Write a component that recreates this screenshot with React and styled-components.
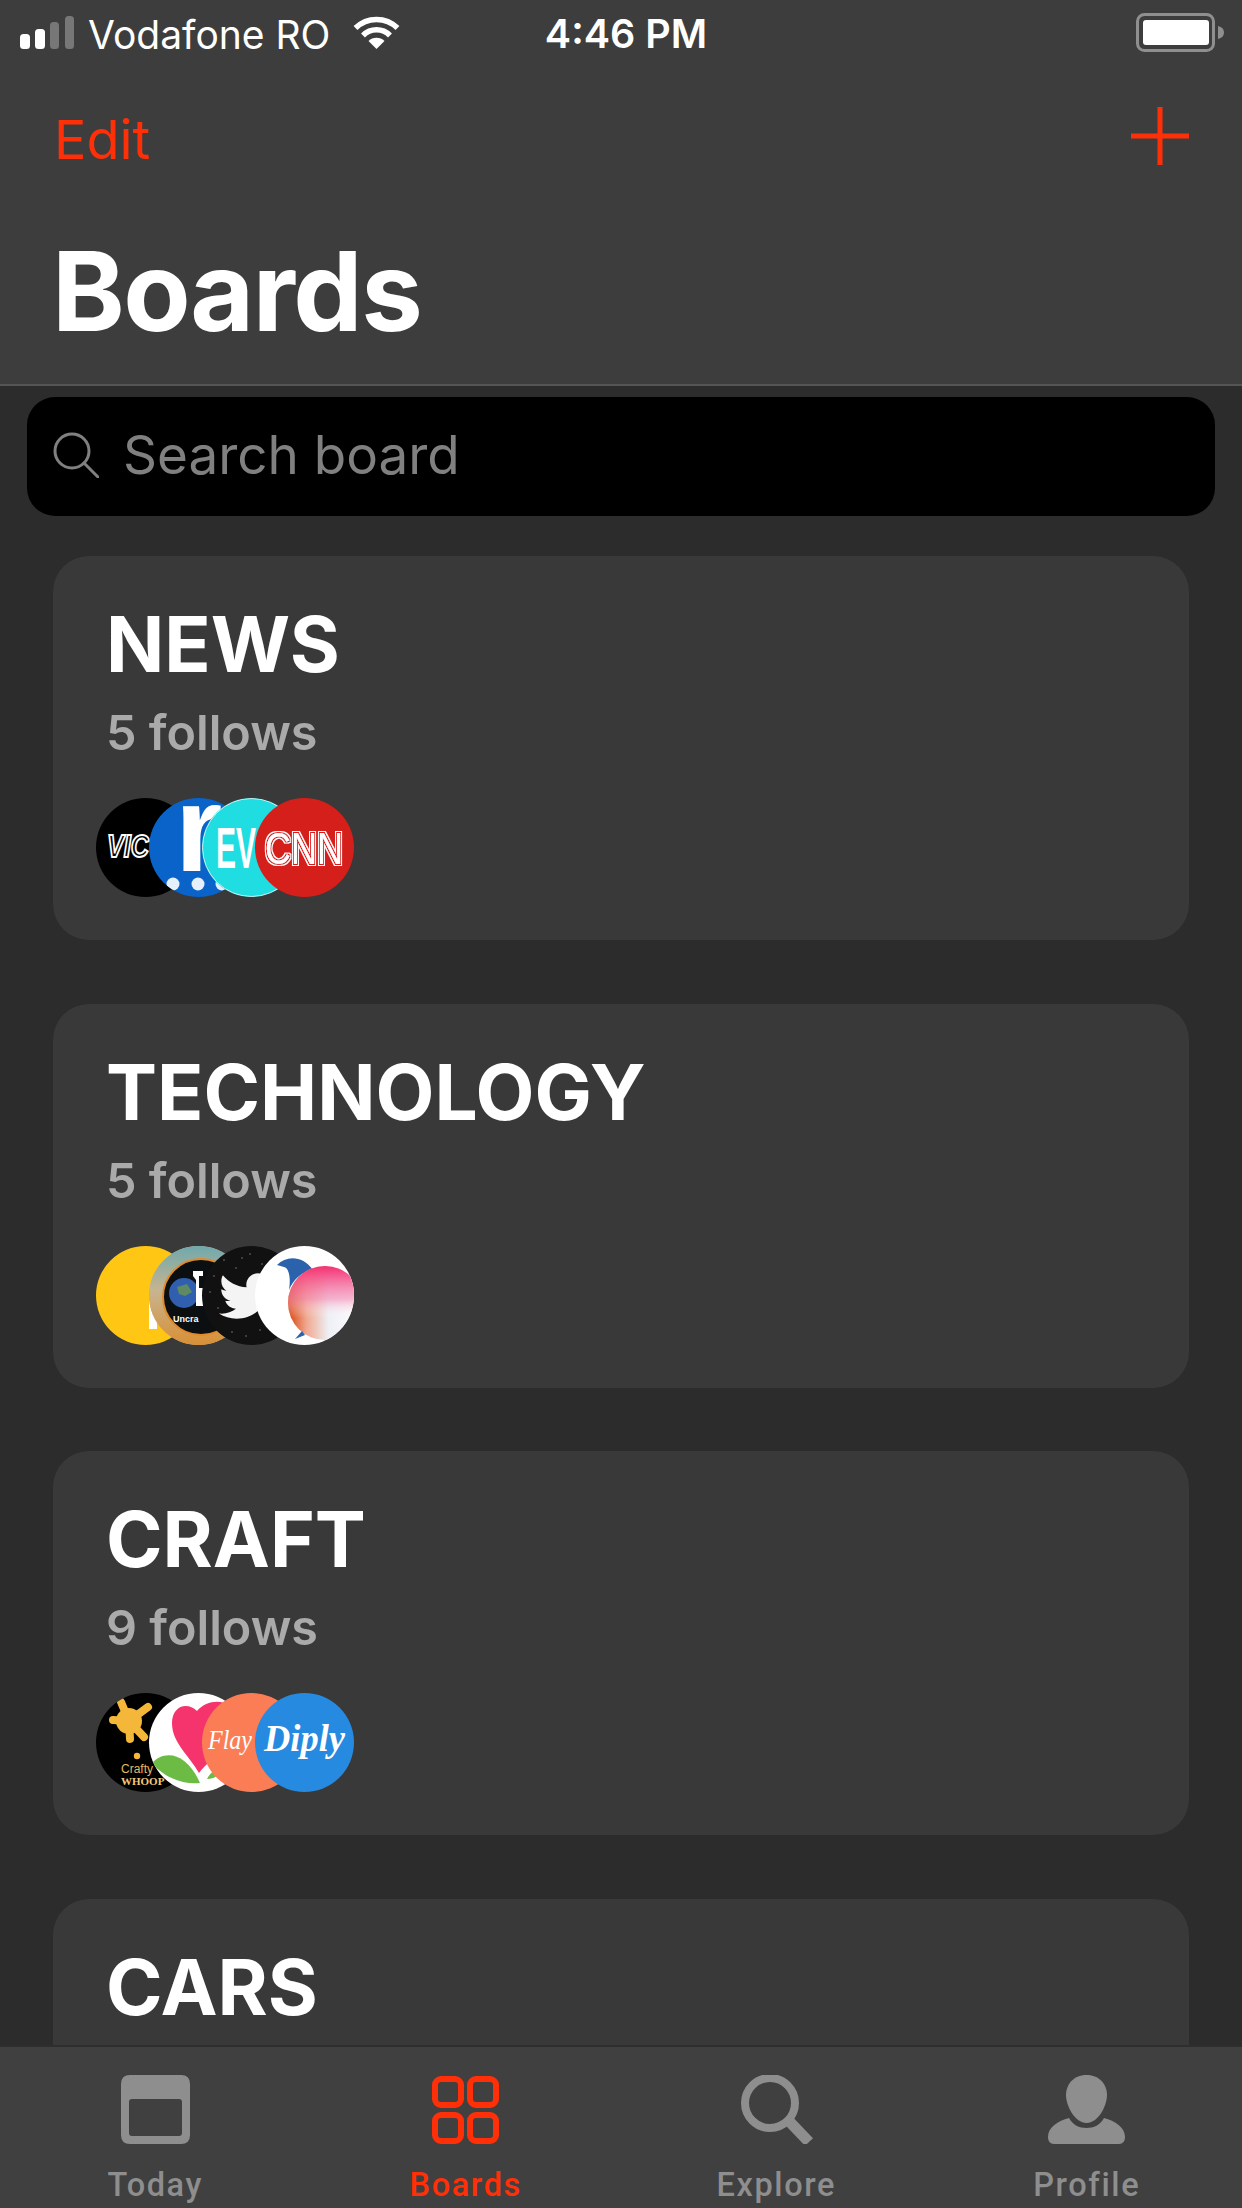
import React from 'react';
import styled, { createGlobalStyle } from 'styled-components';
import { FaTwitter } from 'react-icons/fa';

const GlobalStyle = createGlobalStyle`
  html, body {
    margin: 0;
    padding: 0;
    background: #2c2c2c;
  }
  * {
    box-sizing: border-box;
  }
`;

const ACCENT = '#ff3008';
const MUTED = '#8e8e8e';

const Screen = styled.div`
  width: 1242px;
  height: 2208px;
  display: flex;
  flex-direction: column;
  overflow: hidden;
  background: #2c2c2c;
  font-family: Inter, 'Liberation Sans', sans-serif;
`;

const Header = styled.header`
  flex: none;
  height: 386px;
  background: #3d3d3d;
  border-bottom: 2px solid #555555;
`;

const StatusBar = styled.div`
  height: 66px;
  display: grid;
  grid-template-columns: 1fr auto 1fr;
  align-items: center;
  padding: 0 18px 0 20px;
  color: #ffffff;
`;

const StatusLeft = styled.div`
  display: flex;
  align-items: center;
`;

const Carrier = styled.span`
  margin: 0 23px 0 14px;
  padding-top: 3px;
  font-size: 39px;
  font-weight: 400;
  line-height: 63px;
`;

const Clock = styled.span`
  padding: 3px 0 0 8px;
  font-size: 39.5px;
  font-weight: 600;
  line-height: 63px;
`;

const StatusRight = styled.div`
  display: flex;
  justify-content: flex-end;
`;

const NavRow = styled.div`
  height: 140px;
  display: flex;
  align-items: center;
  justify-content: space-between;
  padding: 0 53px 0 54px;
`;

const EditLabel = styled.span`
  padding-top: 7px;
  color: ${ACCENT};
  font-size: 54px;
  font-weight: 400;
  line-height: 1;
`;

const Title = styled.h1`
  margin: 0;
  padding-left: 52px;
  color: #ffffff;
  font-size: 110px;
  font-weight: 700;
  letter-spacing: -1.5px;
  line-height: 170px;
`;

const SearchWrap = styled.div`
  flex: none;
  padding: 11px 27px 0;
`;

const SearchBox = styled.div`
  height: 119px;
  display: flex;
  align-items: center;
  gap: 24px;
  padding: 0 26px 4px;
  background: #000000;
  border-radius: 28px;
  color: #808080;
  font-size: 53px;
  font-weight: 400;
`;

const BoardList = styled.main`
  flex: 1;
  min-height: 0;
  overflow: hidden;
  display: flex;
  flex-direction: column;
  gap: 63.5px;
  padding: 40px 53px 0;
`;

const Card = styled.section`
  flex: none;
  height: 384px;
  padding: 40px 43px 0;
  background: #393939;
  border-radius: 36px;
`;

const CardTitle = styled.h2`
  margin: 0;
  padding-left: 10px;
  color: #ffffff;
  font-size: 76.5px;
  font-weight: 700;
  line-height: 96px;
`;

const Follows = styled.div`
  margin-top: 11px;
  padding-left: 10px;
  color: #aaaaaa;
  font-size: 48.5px;
  font-weight: 600;
  line-height: 60px;
`;

const AvatarRow = styled.div`
  display: flex;
  margin-top: 35px;
`;

const Avatar = styled.div`
  flex: none;
  width: 99px;
  height: 99px;
  margin-left: -46px;
  border-radius: 50%;
  overflow: hidden;
  background: ${(p) => p.$bg};
  &:first-child {
    margin-left: 0;
  }
  svg {
    display: block;
  }
`;

const TabBar = styled.nav`
  flex: none;
  height: 163px;
  display: grid;
  grid-template-columns: repeat(4, 1fr);
  background: #404040;
  border-top: 2px solid #2e2e2e;
`;

const Tab = styled.div`
  display: flex;
  flex-direction: column;
  align-items: center;
  padding-top: 28px;
  color: ${(p) => (p.$active ? ACCENT : MUTED)};
`;

const TabIcon = styled.div`
  height: 69px;
  display: flex;
  align-items: center;
`;

const TabLabel = styled.span`
  margin-top: 21px;
  font-family: Roboto, Inter, sans-serif;
  font-size: 32.5px;
  font-weight: 500;
  letter-spacing: 1.6px;
  line-height: 40px;
`;

const Signal = () => (
  <svg width="54" height="34" viewBox="0 0 54 34">
    <rect x="0" y="18" width="10" height="15" rx="3.5" fill="#fff" />
    <rect x="15" y="13" width="10" height="20" rx="3.5" fill="#fff" />
    <rect x="30" y="6" width="9" height="27" rx="3.5" fill="#777" />
    <rect x="45" y="0" width="9" height="33" rx="3.5" fill="#777" />
  </svg>
);

const Wifi = () => (
  <svg width="47" height="34" viewBox="0 0 47 34">
    <g fill="none" stroke="#fff" strokeWidth="5.5">
      <path d="M2.5 12 A30 30 0 0 1 44.5 12" />
      <path d="M10 19.5 A19 19 0 0 1 37 19.5" />
    </g>
    <path d="M23.5 33 L15.5 25 A11.5 11.5 0 0 1 31.5 25 Z" fill="#fff" />
  </svg>
);

const Battery = () => (
  <svg width="88" height="40" viewBox="0 0 88 40">
    <rect x="1.5" y="1.5" width="76" height="36" rx="7" fill="none" stroke="#8f8f8f" strokeWidth="3" />
    <rect x="7" y="7" width="66" height="25" rx="3" fill="#fff" />
    <path d="M82 13 C86 14 88 16 88 19.5 C88 23 86 25 82 26 Z" fill="#8f8f8f" />
  </svg>
);

const PlusIcon = () => (
  <svg width="58" height="58" viewBox="0 0 58 58">
    <path d="M29 0 V58 M0 29 H58" stroke={ACCENT} strokeWidth="5" />
  </svg>
);

const SearchGlyph = () => (
  <svg width="46" height="46" viewBox="0 0 46 46" fill="none" stroke="#808080" strokeWidth="3">
    <circle cx="19" cy="19" r="17" />
    <path d="M31 31 L45 45" strokeLinecap="round" />
  </svg>
);

const TodayIcon = () => (
  <svg width="69" height="69" viewBox="0 0 69 69">
    <path
      fillRule="evenodd"
      fill={MUTED}
      d="M9 0 H60 Q69 0 69 9 V60 Q69 69 60 69 H9 Q0 69 0 60 V9 Q0 0 9 0 Z M11 24 Q8 24 8 27 V58 Q8 61 11 61 H58 Q61 61 61 58 V27 Q61 24 58 24 Z"
    />
  </svg>
);

const BoardsIcon = () => (
  <svg width="67" height="68" viewBox="0 0 67 68" fill="none" stroke={ACCENT} strokeWidth="6">
    <rect x="3" y="3" width="26" height="26" rx="6" />
    <rect x="38" y="3" width="26" height="26" rx="6" />
    <rect x="3" y="39" width="26" height="26" rx="6" />
    <rect x="38" y="39" width="26" height="26" rx="6" />
  </svg>
);

const ExploreIcon = () => (
  <svg width="76" height="69" viewBox="-3 0 76 69" fill="none" stroke={MUTED}>
    <circle cx="29" cy="28" r="25" strokeWidth="8" />
    <path d="M47 45 L68 67" strokeWidth="11" />
  </svg>
);

const ProfileIcon = () => (
  <svg width="77" height="69" viewBox="0 0 77 69" fill={MUTED}>
    <path d="M38.5 0 C52 0 59 10 59 20 C59 31 50 48 38.5 48 C27 48 18 31 18 20 C18 10 25 0 38.5 0 Z" />
    <path d="M0 62 C0 52 10 46 21 43 C25 50 31 53 38.5 53 C46 53 52 50 56 43 C67 46 77 52 77 62 C77 66 75 69 71 69 H6 C2 69 0 66 0 62 Z" />
  </svg>
);

// logos, each one drawn in its own 99x99 circle
const Logo = ({ children }) => (
  <svg width="99" height="99" viewBox="0 0 99 99">
    {children}
  </svg>
);

const ViceLogo = () => (
  <Logo>
    <text
      x="11"
      y="59"
      fontFamily="Liberation Sans"
      fontWeight="700"
      fontStyle="italic"
      fontSize="31"
      textLength="42"
      lengthAdjust="spacingAndGlyphs"
      fill="#000"
      stroke="#fff"
      strokeWidth="2"
    >
      VIC
    </text>
  </Logo>
);

const RLogo = () => (
  <Logo>
    <text x="26" y="73" fontFamily="Liberation Sans" fontWeight="700" fontSize="122" fill="#fff">
      r
    </text>
    <circle cx="24" cy="86" r="6.5" fill="#e6f0fb" />
    <circle cx="49" cy="86" r="6.5" fill="#e6f0fb" />
    <circle cx="73" cy="86" r="6.5" fill="#e6f0fb" />
  </Logo>
);

const EvLogo = () => (
  <Logo>
    <circle cx="49.5" cy="49.5" r="49" fill="none" stroke="#d8e8e8" strokeWidth="1" />
    <text
      x="14"
      y="70"
      fontFamily="Liberation Sans"
      fontWeight="700"
      fontSize="58"
      textLength="40"
      lengthAdjust="spacingAndGlyphs"
      fill="#fff"
    >
      EV
    </text>
  </Logo>
);

const CnnLogo = () => (
  <Logo>
    <defs>
      <filter id="cnnLines" filterUnits="userSpaceOnUse" x="0" y="0" width="99" height="99">
        <feMorphology in="SourceAlpha" operator="dilate" radius="1" result="gap" />
        <feFlood floodColor="#d51f1a" />
        <feComposite in2="gap" operator="in" result="gapFill" />
        <feMorphology in="SourceAlpha" operator="dilate" radius="2" result="outer" />
        <feFlood floodColor="#ffffff" />
        <feComposite in2="outer" operator="in" result="outerFill" />
        <feMerge>
          <feMergeNode in="outerFill" />
          <feMergeNode in="gapFill" />
          <feMergeNode in="SourceGraphic" />
        </feMerge>
      </filter>
    </defs>
    <text
      x="10"
      y="66"
      fontFamily="Liberation Sans"
      fontSize="44"
      textLength="78"
      lengthAdjust="spacingAndGlyphs"
      fill="#fff"
      filter="url(#cnnLines)"
    >
      CNN
    </text>
  </Logo>
);

const YellowLogo = () => (
  <Logo>
    <rect x="53" y="52" width="8" height="31" fill="#fff" />
  </Logo>
);

const EarthLogo = () => (
  <Logo>
    <defs>
      <linearGradient id="earthRing" x1="0" y1="0" x2="0" y2="1">
        <stop offset="0" stopColor="#6fa9ad" />
        <stop offset="0.45" stopColor="#c8b490" />
        <stop offset="1" stopColor="#d98f35" />
      </linearGradient>
    </defs>
    <rect width="99" height="99" fill="url(#earthRing)" />
    <circle cx="52" cy="51" r="38" fill="#0b0f12" stroke="#e08a2a" strokeWidth="2" />
    <circle cx="35" cy="47" r="15" fill="#2f5fae" />
    <path d="M28 41 L38 38 L43 46 L36 50 L30 48 Z" fill="#5d8a63" />
    <path d="M44 25 H54 V30 H50 V42 H54 V60 H47 V34 L44 30 Z" fill="#fff" />
    <text x="24" y="76" fontFamily="Liberation Sans" fontWeight="700" fontSize="9" fill="#fff">
      Uncra
    </text>
  </Logo>
);

const TwitterLogo = () => (
  <Logo>
    {[
      [12, 30], [22, 14], [34, 22], [48, 8], [60, 18], [16, 62], [30, 86], [44, 90], [58, 84], [8, 46], [40, 12],
    ].map(([x, y]) => (
      <circle key={`${x}-${y}`} cx={x} cy={y} r="0.8" fill="#777" />
    ))}
    <FaTwitter x="17" y="22" size="56" color="#f4f4f4" />
  </Logo>
);

const BirdLogo = () => (
  <Logo>
    <defs>
      <linearGradient id="birdWing" x1="0" y1="0" x2="1" y2="0">
        <stop offset="0" stopColor="#d8430c" />
        <stop offset="0.25" stopColor="#f0a890" />
        <stop offset="0.55" stopColor="#eef0f6" />
        <stop offset="1" stopColor="#ffffff" />
      </linearGradient>
      <linearGradient id="birdTop" x1="0" y1="0" x2="0" y2="1">
        <stop offset="0" stopColor="#f52f70" />
        <stop offset="0.45" stopColor="#f58ab4" stopOpacity="0.6" />
        <stop offset="0.7" stopColor="#ffffff" stopOpacity="0" />
      </linearGradient>
    </defs>
    <path d="M22 19 C32 9 48 10 58 24 C46 26 38 34 34 44 C36 32 34 22 29 21 Z" fill="#2a62ac" />
    <circle cx="70" cy="57" r="37" fill="url(#birdWing)" />
    <circle cx="70" cy="57" r="37" fill="url(#birdTop)" />
    <path d="M40 93 L47 85 L50 89 Z" fill="#2a62ac" />
  </Logo>
);

const CraftLogo = () => (
  <Logo>
    <g stroke="#f4b73a" strokeWidth="8" strokeLinecap="round">
      <path d="M33 28 L25 9 M33 28 L52 14 M33 28 L17 27 M33 28 L48 44 M33 28 L34 46" />
    </g>
    <circle cx="33" cy="28" r="13" fill="#f4b73a" />
    <circle cx="41" cy="63" r="3.2" fill="#f4b73a" />
    <text x="25" y="80" fontFamily="Liberation Sans" fontSize="12" fill="#e8b860">
      Crafty
    </text>
    <text x="25" y="92" fontFamily="Liberation Serif" fontWeight="700" fontSize="11" fill="#f0c878">
      WHOOP
    </text>
  </Logo>
);

const HeartLogo = () => (
  <Logo>
    <path d="M48 18 C38 8 23 13 23 30 C23 50 40 62 50 80 C62 64 90 50 88 24 C84 6 60 4 48 18 Z" fill="#f5346d" />
    <path d="M3 70 C16 56 38 60 51 90 C34 92 14 84 3 70 Z" fill="#6cbb44" />
    <path d="M58 86 C62 78 68 76 72 76 C70 82 66 86 58 86 Z" fill="#6cbb44" />
  </Logo>
);

const FlayLogo = () => (
  <Logo>
    <text
      x="6"
      y="56"
      fontFamily="Liberation Serif"
      fontStyle="italic"
      fontSize="28"
      textLength="44"
      lengthAdjust="spacingAndGlyphs"
      fill="#fff"
    >
      Flay
    </text>
  </Logo>
);

const DiplyLogo = () => (
  <Logo>
    <text
      x="9"
      y="58"
      fontFamily="Liberation Serif"
      fontWeight="700"
      fontStyle="italic"
      fontSize="38"
      textLength="81"
      lengthAdjust="spacingAndGlyphs"
      fill="#fff"
    >
      Diply
    </text>
  </Logo>
);

const boards = [
  {
    name: 'NEWS',
    follows: '5 follows',
    logos: [
      { bg: '#000000', Mark: ViceLogo },
      { bg: '#0a63c8', Mark: RLogo },
      { bg: '#1fdde0', Mark: EvLogo },
      { bg: '#d51f1a', Mark: CnnLogo },
    ],
  },
  {
    name: 'TECHNOLOGY',
    follows: '5 follows',
    logos: [
      { bg: '#ffc613', Mark: YellowLogo },
      { bg: '#c8b490', Mark: EarthLogo },
      { bg: '#111111', Mark: TwitterLogo },
      { bg: '#ffffff', Mark: BirdLogo },
    ],
  },
  {
    name: 'CRAFT',
    follows: '9 follows',
    logos: [
      { bg: '#000000', Mark: CraftLogo },
      { bg: '#ffffff', Mark: HeartLogo },
      { bg: '#fb7d56', Mark: FlayLogo },
      { bg: '#258ae0', Mark: DiplyLogo },
    ],
  },
  { name: 'CARS' },
];

const tabs = [
  { label: 'Today', Icon: TodayIcon },
  { label: 'Boards', Icon: BoardsIcon, active: true },
  { label: 'Explore', Icon: ExploreIcon },
  { label: 'Profile', Icon: ProfileIcon },
];

const App = () => (
  <Screen>
    <GlobalStyle />
    <Header>
      <StatusBar>
        <StatusLeft>
          <Signal />
          <Carrier>Vodafone RO</Carrier>
          <Wifi />
        </StatusLeft>
        <Clock>4:46 PM</Clock>
        <StatusRight>
          <Battery />
        </StatusRight>
      </StatusBar>
      <NavRow>
        <EditLabel>Edit</EditLabel>
        <PlusIcon />
      </NavRow>
      <Title>Boards</Title>
    </Header>
    <SearchWrap>
      <SearchBox>
        <SearchGlyph />
        <span>Search board</span>
      </SearchBox>
    </SearchWrap>
    <BoardList>
      {boards.map((board) => (
        <Card key={board.name}>
          <CardTitle>{board.name}</CardTitle>
          {board.follows && <Follows>{board.follows}</Follows>}
          {board.logos && (
            <AvatarRow>
              {board.logos.map(({ bg, Mark }, i) => (
                <Avatar key={i} $bg={bg}>
                  <Mark />
                </Avatar>
              ))}
            </AvatarRow>
          )}
        </Card>
      ))}
    </BoardList>
    <TabBar>
      {tabs.map(({ label, Icon, active }) => (
        <Tab key={label} $active={active}>
          <TabIcon>
            <Icon />
          </TabIcon>
          <TabLabel>{label}</TabLabel>
        </Tab>
      ))}
    </TabBar>
  </Screen>
);

export default App;
